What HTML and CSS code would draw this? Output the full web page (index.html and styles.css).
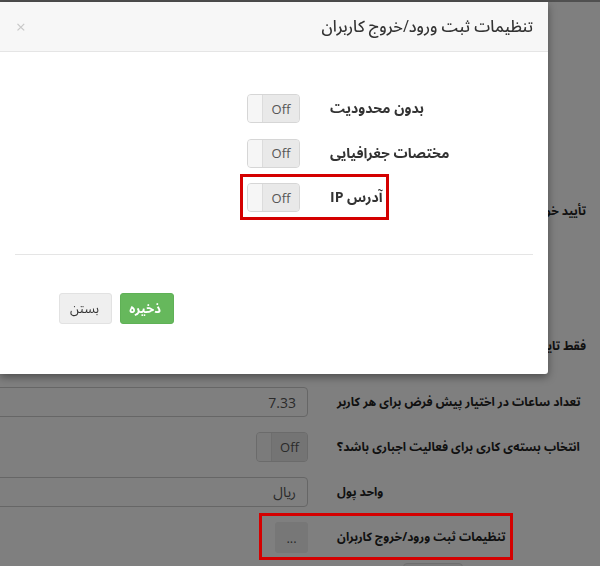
FILE: index.html
```html
<!DOCTYPE html>
<html lang="fa" dir="rtl">
<head>
    <meta charset="UTF-8">
    <meta name="viewport" content="width=device-width, initial-scale=1.0">
    <title>تنظیمات ثبت ورود/خروج کاربران</title>
    <link rel="stylesheet" href="styles.css">
</head>
<body>
    <div class="topbar"></div>

    <!-- Settings page behind the dialog -->
    <div class="page">
        <div class="form-row">
            <label class="control-label long">تأیید خودکار ساعات ورود و خروج کاربران توسط مدیر</label>
            <div class="control">
                <div class="switch"><span class="switch-handle"></span><span class="switch-off">Off</span></div>
            </div>
        </div>
        <div class="form-row">
            <label class="control-label">ساعت شروع کار</label>
            <div class="control"><div class="form-control">08:00</div></div>
        </div>
        <div class="form-row">
            <label class="control-label">ساعت پایان کار</label>
            <div class="control"><div class="form-control">16:00</div></div>
        </div>
        <div class="form-row spaced">
            <label class="control-label long">فقط تایید ورود از طریق دستگاه‌های ثبت شده</label>
            <div class="control">
                <div class="switch"><span class="switch-handle"></span><span class="switch-off">Off</span></div>
            </div>
        </div>
        <div class="form-row">
            <label class="control-label">تعداد ساعات در اختیار پیش فرض برای هر کاربر</label>
            <div class="control"><div class="form-control">7.33</div></div>
        </div>
        <div class="form-row">
            <label class="control-label">انتخاب بسته‌ی کاری برای فعالیت اجباری باشد؟</label>
            <div class="control">
                <div class="switch"><span class="switch-handle"></span><span class="switch-off">Off</span></div>
            </div>
        </div>
        <div class="form-row">
            <label class="control-label">واحد پول</label>
            <div class="control"><div class="form-control">ریال</div></div>
        </div>
        <div class="form-row marked last">
            <label class="control-label">تنظیمات ثبت ورود/خروج کاربران</label>
            <div class="control"><button class="btn-more">...</button></div>
        </div>
        <div class="page-actions">
            <div class="btn-page"></div>
        </div>
    </div>

    <div class="backdrop"></div>

    <!-- Dialog -->
    <div class="modal">
        <div class="modal-header">
            <h4>تنظیمات ثبت ورود/خروج کاربران</h4>
            <span class="close">×</span>
        </div>
        <div class="modal-body">
            <div class="modal-row">
                <label class="modal-label">بدون محدودیت</label>
                <div class="control">
                    <div class="switch"><span class="switch-handle"></span><span class="switch-off">Off</span></div>
                </div>
            </div>
            <div class="modal-row">
                <label class="modal-label">مختصات جغرافیایی</label>
                <div class="control">
                    <div class="switch"><span class="switch-handle"></span><span class="switch-off">Off</span></div>
                </div>
            </div>
            <div class="modal-row marked">
                <label class="modal-label">آدرس IP</label>
                <div class="control">
                    <div class="switch"><span class="switch-handle"></span><span class="switch-off">Off</span></div>
                </div>
            </div>

            <div class="divider"></div>

            <div class="modal-footer">
                <button class="btn btn-success">ذخیره</button>
                <button class="btn btn-default">بستن</button>
            </div>
        </div>
    </div>
</body>
</html>
```

FILE: styles.css
```css
* {
    margin: 0;
    padding: 0;
    box-sizing: border-box;
}

html, body {
    height: 100%;
    overflow: hidden;
}

body {
    font-family: "Open Sans", "Noto Sans Arabic", "DejaVu Sans", sans-serif;
    font-size: 14px;
    color: #333;
    background: #fff;
    direction: rtl;
}

button {
    font-family: inherit;
}

.topbar {
    height: 2px;
    background: #a0a0a0;
}

/* page behind the dialog */
.page {
    width: 700px;
    padding: 194px 14px 0 0;
}

.form-row {
    display: grid;
    grid-template-columns: 249px 1fr;
    column-gap: 29px;
    align-items: center;
    height: 30px;
    margin-bottom: 15px;
    position: relative;
}

.form-row.spaced {
    margin-bottom: 26px;
}

.form-row.last {
    margin-bottom: 11px;
}

.control-label {
    font-size: 12px;
    font-weight: bold;
    color: #222;
    text-align: left;
    white-space: nowrap;
}

.control-label.long {
    text-align: right;
}

.control {
    display: flex;
}

.form-control {
    width: 100%;
    height: 30px;
    border: 1px solid #ccc;
    border-radius: 4px;
    padding: 0 11px;
    display: flex;
    align-items: center;
    color: #555;
    background: #fff;
}

.btn-more {
    width: 33px;
    height: 31px;
    border: none;
    border-radius: 3px;
    background: #eee;
    color: #555;
    font-size: 13px;
}

.page-actions {
    padding-right: 123px;
}

.btn-page {
    width: 60px;
    height: 31px;
    border: 1px solid #ddd;
    border-radius: 4px;
    background: #f4f4f4;
}

/* red annotation frames */
.marked::after {
    content: "";
    position: absolute;
    top: -9px;
    bottom: -8px;
    border: 3px solid #d40000;
    z-index: 15;
}

.form-row.marked::after {
    right: 73px;
    width: 248px;
}

.modal-row.marked::after {
    left: 225px;
    width: 143px;
}

/* switch */
.switch {
    direction: ltr;
    display: flex;
    width: 53px;
    height: 29px;
    border: 1px solid #d6d6d6;
    border-radius: 4px;
    overflow: hidden;
    background: #eee;
}

.form-row .switch {
    width: 52px;
    height: 30px;
}

.switch-handle {
    width: 15px;
    background: #f6f6f6;
    border-right: 1px solid #dcdcdc;
}

.switch-off {
    flex: 1;
    display: flex;
    align-items: center;
    justify-content: center;
    font-size: 13px;
    color: #555;
    background: #e9e9e9;
}

/* dialog */
.backdrop {
    position: fixed;
    top: 0;
    left: 0;
    right: 0;
    bottom: 0;
    background: rgba(0, 0, 0, 0.5);
    z-index: 10;
}

.modal {
    position: absolute;
    top: 2px;
    left: 0;
    width: 548px;
    height: 372px;
    background: #fff;
    border-radius: 0 3px 3px 0;
    box-shadow: 0 3px 9px rgba(0, 0, 0, 0.4);
    z-index: 20;
}

.modal-header {
    height: 50px;
    background: #f7f7f7;
    border-bottom: 1px solid #e5e5e5;
    display: flex;
    align-items: center;
    justify-content: space-between;
    padding: 0 15px;
}

.modal-header h4 {
    font-size: 16px;
    font-weight: 500;
    color: #333;
}

.close {
    font-size: 17px;
    color: #c8c8c8;
    padding-left: 1px;
}

.modal-body {
    padding: 42px 15px 0;
}

.modal-row {
    display: grid;
    grid-template-columns: 203px 1fr;
    column-gap: 30px;
    align-items: center;
    height: 29px;
    margin-bottom: 15.5px;
    position: relative;
}

.modal-row.marked {
    margin-bottom: 0;
}

.modal-label {
    font-size: 14px;
    font-weight: bold;
    color: #333;
    text-align: left;
    white-space: nowrap;
}

.divider {
    height: 1px;
    background: #e5e5e5;
    margin-top: 42px;
}

.modal-footer {
    display: flex;
    justify-content: flex-end;
    gap: 8px;
    padding: 38px 0 0 44px;
}

.btn {
    height: 31px;
    padding: 0 12px;
    border-radius: 3px;
    font-size: 13px;
}

.btn-success {
    width: 54px;
    background: #66b85c;
    border: 1px solid #5fb156;
    color: #fff;
    font-weight: bold;
}

.btn-default {
    width: 53px;
    background: #efefef;
    border: 1px solid #e2e2e2;
    color: #333;
}
```
